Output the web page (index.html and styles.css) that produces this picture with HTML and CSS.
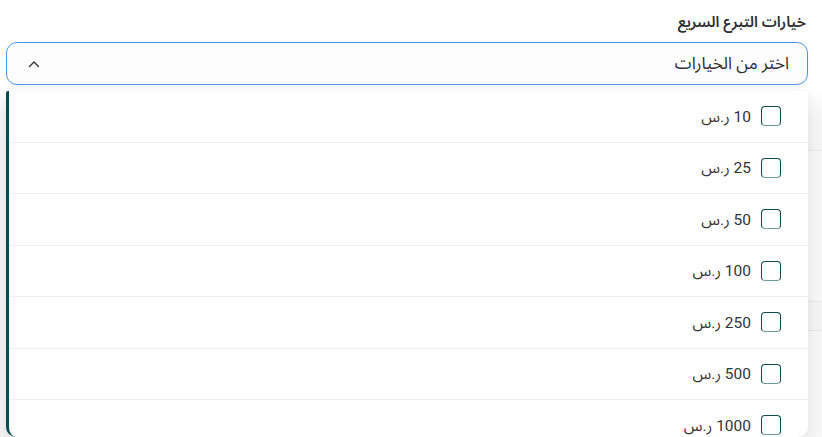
FILE: index.html
```html
<!DOCTYPE html>
<html lang="ar" dir="rtl">
<head>
<meta charset="utf-8">
<link rel="stylesheet" href="styles.css">
</head>
<body>
<div class="page">
  <div class="bg-card bg-card-1"></div>
  <div class="bg-card bg-card-2"></div>
  <div class="field">
    <label class="field-label">خيارات التبرع السريع</label>
    <div class="select">
      <span class="select-text">اختر من الخيارات</span>
      <svg class="chevron" width="12" height="8" viewBox="0 0 12 8"><path d="M1.5 6.5 L6 2 L10.5 6.5" fill="none" stroke="#333" stroke-width="1.4" stroke-linecap="round" stroke-linejoin="round"/></svg>
    </div>
    <div class="panel">
      <ul class="options">
        <li class="option"><span class="box"></span><span class="amount">10 ر.س</span></li>
        <li class="option"><span class="box"></span><span class="amount">25 ر.س</span></li>
        <li class="option"><span class="box"></span><span class="amount">50 ر.س</span></li>
        <li class="option"><span class="box"></span><span class="amount">100 ر.س</span></li>
        <li class="option"><span class="box"></span><span class="amount">250 ر.س</span></li>
        <li class="option"><span class="box"></span><span class="amount">500 ر.س</span></li>
        <li class="option"><span class="box"></span><span class="amount">1000 ر.س</span></li>
      </ul>
    </div>
  </div>
</div>
</body>
</html>
```
FILE: styles.css
```css
html, body {
  margin: 0;
  padding: 0;
  background: #ffffff;
  height: 100%;
  overflow: hidden;
}
body {
  font-family: Roboto, "Noto Sans Arabic", "DejaVu Sans", sans-serif;
  color: #333;
}
.page {
  position: relative;
  height: 437px;
  overflow: hidden;
  background: linear-gradient(to bottom, #ffffff 0, #ffffff 88px, #f4f4f4 120px, #f2f2f2 100%);
}
.bg-card {
  position: absolute;
  right: -20px;
  width: 60px;
  background: #f6f6f6;
  border: 1px solid #e6e6e6;
  border-radius: 12px;
}
.bg-card-1 { top: 150px; height: 150px; }
.bg-card-2 { top: 330px; height: 160px; }
.field {
  position: relative;
  padding: 12px 14px 0 6px;
}
.field-label {
  display: block;
  font-size: 15px;
  font-weight: 600;
  color: #2e2e2e;
  line-height: 20px;
  padding-right: 2px;
  margin-bottom: 10px;
}
.select {
  height: 43px;
  box-sizing: border-box;
  border: 1.5px solid #4d95ea;
  border-radius: 11px;
  background: #fdfdfd;
  display: flex;
  align-items: center;
  justify-content: space-between;
  padding: 0 18px 0 21px;
  box-shadow: 0 2px 4px rgba(0,0,0,0.04);
}
.select-text {
  font-size: 17px;
  color: #2f2f2f;
}
.chevron { display: block; }
.panel {
  margin-top: 6px;
  height: 346px;
  background: #fff;
  border-left: 3px solid #064b56;
  border-radius: 2px 2px 10px 10px;
  box-shadow: 0 4px 14px rgba(0,0,0,0.08);
  overflow: hidden;
}
.options {
  list-style: none;
  margin: 0;
  padding: 0;
}
.option {
  height: 51.5px;
  box-sizing: border-box;
  border-bottom: 1px solid #efefef;
  display: flex;
  align-items: center;
  gap: 10px;
  padding-right: 27px;
}
.box {
  width: 20px;
  height: 20px;
  box-sizing: border-box;
  border: 1.5px solid #0d4a52;
  border-bottom-color: #6f9aa0;
  border-radius: 4px;
  background: #fff;
  flex: none;
}
.amount {
  font-size: 15.5px;
  color: #333;
  padding-top: 1px;
}
```
